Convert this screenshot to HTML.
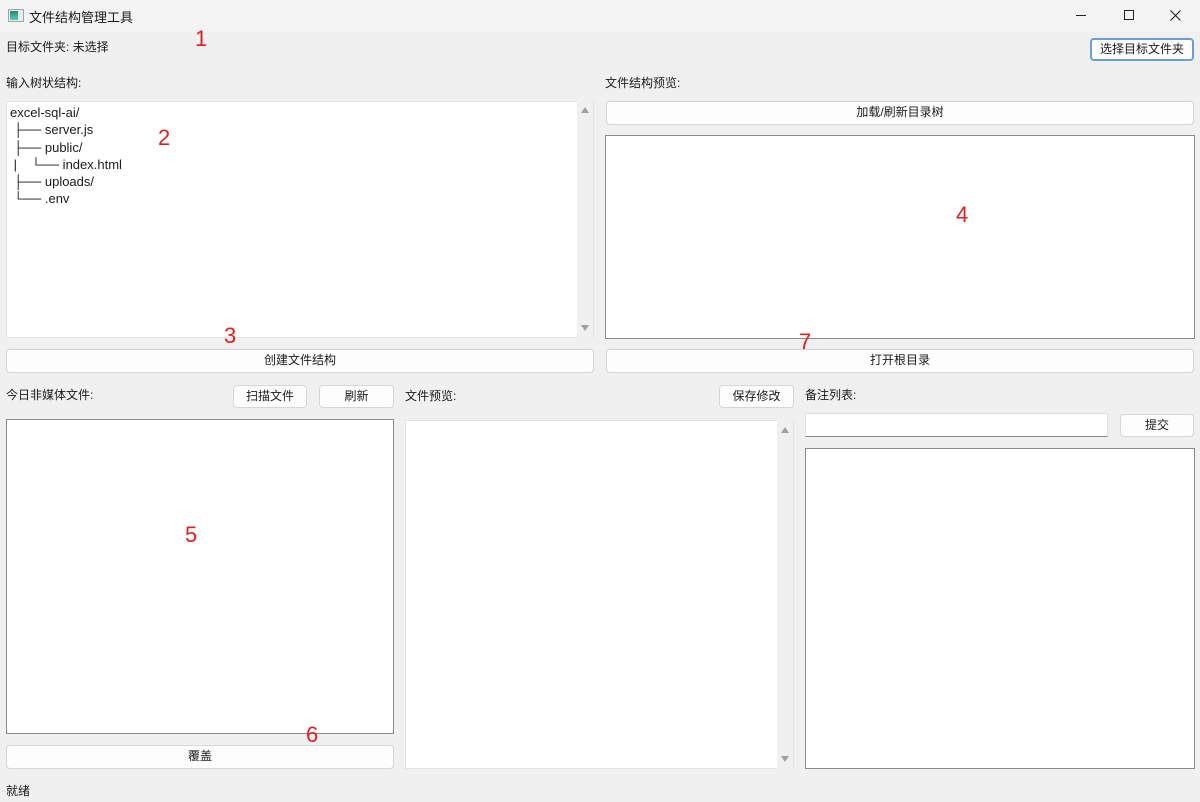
<!DOCTYPE html>
<html><head><meta charset="utf-8"><style>
*{box-sizing:border-box;margin:0;padding:0}
body{width:1200px;height:802px;background:#f0f0f0;font-family:"Liberation Sans","Noto Sans CJK SC",sans-serif;font-size:12px;color:#1a1a1a;position:relative;overflow:hidden}
.a{position:absolute}
.btn{position:absolute;background:#fdfdfd;border:1px solid #d6d6d6;border-radius:4px;text-align:center;font-size:12px;line-height:21px;color:#1a1a1a}
.box{position:absolute;background:#fff}
.bd{border:1px solid #8a8a8a}
.sb{position:absolute;background:#f0f0f0;width:16px}
.num{position:absolute;color:#e02020;font-size:22px;font-family:"Liberation Sans",sans-serif}
.up,.dn{position:absolute;left:4px;width:0;height:0;border-left:4px solid transparent;border-right:4px solid transparent}
.up{border-bottom:6px solid #a0a0a0}.dn{border-top:6px solid #a0a0a0}
</style></head><body>
<div class="a" style="left:0;top:0;width:1200px;height:32px;background:#f3f3f3"></div>
<div class="a" style="left:8px;top:9px;width:16px;height:13px;background:#e8ecec;border:1px solid #9aa"><div style="position:absolute;left:1px;top:1px;width:8px;height:9px;background:linear-gradient(#2a8a6a,#5cb)"></div></div>
<div class="a" style="left:29px;top:7px;font-size:13px">文件结构管理工具</div>
<div class="a" style="left:1076px;top:15px;width:10px;height:1px;background:#222"></div>
<div class="a" style="left:1124px;top:10px;width:10px;height:10px;border:1px solid #222"></div>
<svg class="a" style="left:1170px;top:10px" width="11" height="11"><path d="M0.5 0.5L10.5 10.5M10.5 0.5L0.5 10.5" stroke="#222" stroke-width="1.1"/></svg>

<div class="a" style="left:6px;top:38px">目标文件夹: 未选择</div>
<div class="btn" style="left:1090px;top:38px;width:104px;height:23px;border:2px solid #6a9fd4;line-height:19px">选择目标文件夹</div>
<div class="a" style="left:6px;top:74px">输入树状结构:</div>
<div class="a" style="left:605px;top:74px">文件结构预览:</div>

<div class="box" style="left:6px;top:101px;width:588px;height:237px;border:1px solid #e4e4e4"></div>
<div class="sb" style="left:577px;top:101px;height:237px"><div class="up" style="top:6px"></div><div class="dn" style="top:224px"></div></div>
<div class="a" style="left:10px;top:104px;font-size:13px;line-height:17.3px;white-space:pre;font-family:'Liberation Sans','DejaVu Sans',sans-serif">excel-sql-ai/
 ├── server.js
 ├── public/
 |    └── index.html
 ├── uploads/
 └── .env</div>

<div class="btn" style="left:606px;top:101px;width:588px;height:24px">加载/刷新目录树</div>
<div class="box bd" style="left:605px;top:135px;width:590px;height:204px"></div>
<div class="btn" style="left:6px;top:349px;width:588px;height:24px">创建文件结构</div>
<div class="btn" style="left:606px;top:349px;width:588px;height:24px">打开根目录</div>

<div class="a" style="left:6px;top:386px">今日非媒体文件:</div>
<div class="btn" style="left:233px;top:385px;width:74px;height:23px">扫描文件</div>
<div class="btn" style="left:319px;top:385px;width:75px;height:23px">刷新</div>
<div class="a" style="left:405px;top:387px">文件预览:</div>
<div class="btn" style="left:719px;top:385px;width:75px;height:23px">保存修改</div>
<div class="a" style="left:805px;top:386px">备注列表:</div>

<div class="box bd" style="left:6px;top:419px;width:388px;height:315px"></div>
<div class="btn" style="left:6px;top:745px;width:388px;height:24px">覆盖</div>
<div class="box" style="left:405px;top:420px;width:389px;height:349px;border:1px solid #e4e4e4"></div>
<div class="sb" style="left:777px;top:420px;height:349px"><div class="up" style="top:7px"></div><div class="dn" style="top:336px"></div></div>
<div class="box" style="left:805px;top:413px;width:303px;height:24px;border:1px solid #e0e0e0;border-bottom:1px solid #888"></div>
<div class="btn" style="left:1120px;top:414px;width:74px;height:23px">提交</div>
<div class="box bd" style="left:805px;top:448px;width:390px;height:321px"></div>
<div class="a" style="left:6px;top:782px">就绪</div>

<div class="num" style="left:195px;top:26px">1</div>
<div class="num" style="left:158px;top:125px">2</div>
<div class="num" style="left:224px;top:323px">3</div>
<div class="num" style="left:956px;top:202px">4</div>
<div class="num" style="left:185px;top:522px">5</div>
<div class="num" style="left:306px;top:722px">6</div>
<div class="num" style="left:799px;top:329px">7</div>
</body></html>
